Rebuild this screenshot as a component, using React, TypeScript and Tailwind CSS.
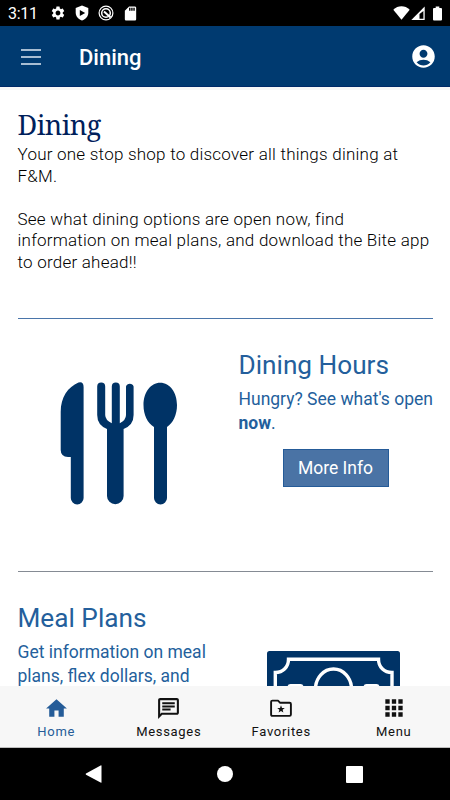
import React from "react";
import {
  MdSettings,
  MdSdCard,
  MdAccountCircle,
  MdHome,
  MdOutlineChat,
  MdApps,
} from "react-icons/md";

function StatusBar() {
  return (
    <div className="flex h-[26px] shrink-0 items-center bg-black pl-[8px] pr-[8px] text-white">
      <span className="w-[42px] pt-[2px] text-[16px] leading-[26px] tracking-[-0.3px]">3:11</span>
      <MdSettings className="size-[16px]" />
      <svg className="ml-[8px] h-[16px] w-[16px]" viewBox="0 0 16 16">
        <path d="M8 0.5 L14.3 3 V7.5 C14.3 11.5 11.6 14.3 8 15.5 C4.4 14.3 1.7 11.5 1.7 7.5 V3 Z" fill="#fff" />
        <path d="M5.8 4.9 L11.2 8 L5.8 11.1 Z" fill="#000" />
      </svg>
      <svg className="ml-[8px] h-[16px] w-[16px]" viewBox="0 0 16 16" fill="none" stroke="#fff">
        <circle cx="8" cy="8" r="6.9" strokeWidth="1.2" />
        <circle cx="8" cy="8" r="4.3" strokeWidth="1.5" />
        <path d="M6 6.5 L12.6 12.6" strokeWidth="2" />
      </svg>
      <MdSdCard className="ml-[8px] h-[17px] w-[17px]" />
      <svg className="ml-auto h-[14px] w-[17px]" viewBox="0 0 17 14">
        <path d="M0.3 3.7 C5 -0.8 12 -0.8 16.7 3.7 L8.5 13.8 Z" fill="#fff" />
      </svg>
      <svg className="ml-[1px] h-[15px] w-[14px]" viewBox="0 0 14 15">
        <path d="M13.7 0.5 V14 H0.3 Z" fill="#fff" />
        <path d="M12.4 5 V12.8 H8.5 V8 Z" fill="#000" />
      </svg>
      <svg className="ml-[8px] h-[15px] w-[9px]" viewBox="0 0 9 15">
        <path d="M2.7 0.5 H6.3 V2 H8 Q9 2 9 3 V13.5 Q9 14.5 8 14.5 H1 Q0 14.5 0 13.5 V3 Q0 2 1 2 H2.7 Z" fill="#fff" />
      </svg>
    </div>
  );
}

function AppBar() {
  return (
    <header className="flex h-[61px] shrink-0 items-center border-b border-[#002a68] bg-[#003a70] pl-[21px] pr-[13px] text-white">
      <div className="flex w-[20px] flex-col gap-[5px] pt-[1px]">
        <div className="h-[2px] bg-[#a8bdd2]" />
        <div className="h-[2px] bg-[#a8bdd2]" />
        <div className="h-[2px] bg-[#a8bdd2]" />
      </div>
      <h1 className="ml-[38px] pt-[3px] text-[22px] font-medium leading-[28px]">Dining</h1>
      <MdAccountCircle className="ml-auto size-[27px]" />
    </header>
  );
}

function Cutlery() {
  return (
    <svg className="ml-[42px] mt-[63px] h-[123px] w-[118px] shrink-0" viewBox="0 0 118 123" fill="#003366">
      <path d="M18.5 0.5 Q23.6 -0.8 23.6 5 V116 A6.4 6.4 0 0 1 10.8 116 V75 H8 Q0.7 74.5 0.7 68 V30 C0.7 15 8 5 18.5 0.5 Z" />
      <path d="M37.2 4.5 A4 4 0 0 1 45.2 4.5 V33 Q45.2 38 51.8 41.3 V4.5 A4 4 0 0 1 59.8 4.5 V41.3 Q66 38 66 33 V4.5 A4 4 0 0 1 73.6 4.5 V33 Q73.6 43 63.6 47 V114 A8.2 8.2 0 0 1 47 114 V47 Q37.2 43 37.2 33 Z" />
      <path d="M100.2 0.8 C110 0.8 117 10.5 117 23 C117 33 113 41 107 45 V116 A6.5 6.5 0 0 1 94 116 V45 C87.5 41 83.5 33 83.5 23 C83.5 10.5 90.5 0.8 100.2 0.8 Z" />
    </svg>
  );
}

function Banknote() {
  return (
    <svg className="mt-[79px] h-[76px] w-[133px]" viewBox="0 0 133 76">
      <rect width="133" height="76" rx="2.5" fill="#003366" />
      <path
        d="M21.5 8.3 H111.5 C111.5 16 117 21.5 125 21.5 V56 C117 56 111.5 61 111.5 68 H21.5 C21.5 61 16 56 8.3 56 V21.5 C16 21.5 21.5 16 21.5 8.3 Z"
        fill="none"
        stroke="#fff"
        strokeWidth="3.4"
      />
      <ellipse cx="66.5" cy="38" rx="18" ry="20" fill="none" stroke="#fff" strokeWidth="3.4" />
      <rect x="20.5" y="33" width="16" height="10" rx="3" fill="#fff" />
      <rect x="96.5" y="33" width="16" height="10" rx="3" fill="#fff" />
    </svg>
  );
}

function FolderStar() {
  return (
    <svg className="size-[24px]" viewBox="0 0 24 24">
      <path d="M3.4 4.6 H9 L11.2 6.8 H20.6 Q21.9 6.8 21.9 8.1 V18.5 Q21.9 19.9 20.6 19.9 H3.4 Q2.1 19.9 2.1 18.5 V5.8 Q2.1 4.6 3.4 4.6 Z" fill="none" stroke="#111" strokeWidth="1.9" strokeLinejoin="round" />
      <path d="M12 9.3 L13 12 L15.8 12.1 L13.6 13.8 L14.4 16.5 L12 15 L9.6 16.5 L10.4 13.8 L8.2 12.1 L11 12 Z" fill="#111" />
    </svg>
  );
}

function Tab({ label, active, children }: { label: string; active?: boolean; children: React.ReactNode }) {
  return (
    <div className={active ? "flex flex-1 flex-col items-center pt-[10px] text-[#255c98]" : "flex flex-1 flex-col items-center pt-[10px] text-[#111111]"}>
      {children}
      <span className="mt-[3px] text-[13px] leading-[18px] tracking-[0.7px]">{label}</span>
    </div>
  );
}

export default function App() {
  return (
    <div className="flex h-[800px] w-[450px] flex-col overflow-hidden bg-white font-[Roboto,sans-serif]">
      <StatusBar />
      <AppBar />
      <main className="min-h-0 flex-1 overflow-hidden border-t-[3px] border-[#f8f8f8] px-[17.5px]">
        <h2 className="mt-[17px] h-[37px] font-['Noto_Serif','DejaVu_Serif',serif] text-[27px] leading-[36px] tracking-[-0.5px] text-[#00205b]">Dining</h2>
        <p className="whitespace-nowrap text-[17px] font-light leading-[21.6px] tracking-[0.23px] text-black">
          Your one stop shop to discover all things dining at
          <br />
          F&amp;M.
          <br />
          <br />
          See what dining options are open now, find
          <br />
          information on meal plans, and download the Bite app
          <br />
          to order ahead!!
        </p>
        <section className="mt-[44.6px] flex h-[253px] border-t border-[#4a75aa]">
          <Cutlery />
          <div className="ml-[61px] whitespace-nowrap pt-[29px] text-[#245f9c]">
            <h3 className="text-[26.2px] leading-[34px]">Dining Hours</h3>
            <p className="mt-[5px] text-[17.5px] leading-[24px]">
              Hungry? See what's open
              <br />
              <b>now</b>.
            </p>
            <button className="ml-[44px] mt-[14px] block h-[38px] w-[106px] border border-[#255b98] bg-[#4a73a5] text-[17.5px] leading-[35px] text-white">More Info</button>
          </div>
        </section>
        <section className="flex h-[253px] border-t border-[#858b94]">
          <div className="w-[249px] whitespace-nowrap pt-[29px] text-[#245f9c]">
            <h3 className="text-[26.2px] leading-[34px]">Meal Plans</h3>
            <p className="mt-[5px] text-[17.5px] leading-[24px]">
              Get information on meal
              <br />
              plans, flex dollars, and
            </p>
          </div>
          <Banknote />
        </section>
      </main>
      <nav className="flex h-[62px] shrink-0 border-b border-[#bdbdbd] bg-[#f7f7f7]">
        <Tab label="Home" active>
          <MdHome className="size-[25px] -mb-[1px]" />
        </Tab>
        <Tab label="Messages">
          <MdOutlineChat className="size-[25px] -mb-[1px]" />
        </Tab>
        <Tab label="Favorites">
          <FolderStar />
        </Tab>
        <Tab label="Menu">
          <MdApps className="size-[26px] -my-[1px]" />
        </Tab>
      </nav>
      <div className="flex h-[52px] shrink-0 items-center bg-black pl-[85px]">
        <svg className="h-[18px] w-[17px]" viewBox="0 0 17 18">
          <path d="M16.5 0.8 V17.2 Q16.5 18 15.6 17.6 L1 9.7 Q0.3 9 1 8.5 L15.6 0.4 Q16.5 0 16.5 0.8 Z" fill="#fff" />
        </svg>
        <div className="ml-[115px] size-[16px] rounded-full bg-white" />
        <div className="ml-[113px] size-[17px] rounded-[1px] bg-white" />
      </div>
    </div>
  );
}
